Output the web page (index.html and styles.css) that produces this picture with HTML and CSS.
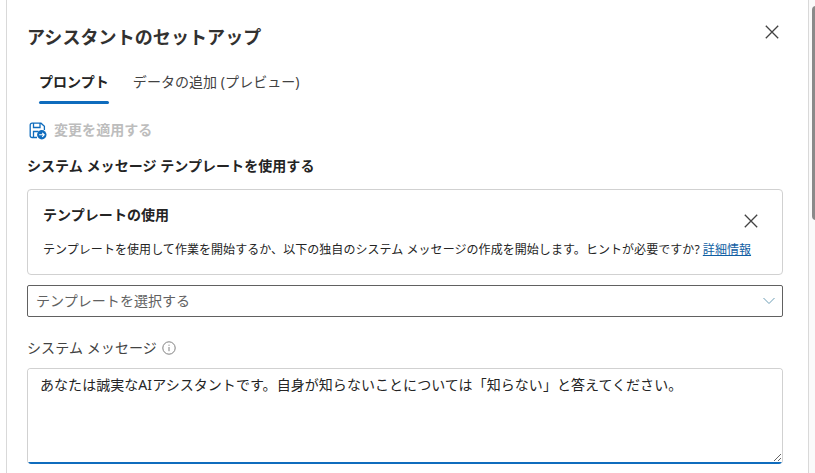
FILE: index.html
```html
<!DOCTYPE html>
<html lang="ja">

<head>
	<meta charset="UTF-8">
	<meta name="viewport" content="width=device-width, initial-scale=1.0">
	<title>アシスタントのセットアップ</title>

	<link rel="stylesheet" href="styles.css">

</head>

<body>

	<div class="main">

		<div class="panel">

			<div class="head">
				<h1>アシスタントのセットアップ</h1>
				<button class="close" aria-label="閉じる">
					<svg width="14" height="14" viewBox="0 0 14 14"><path d="M.8.8l12.4 12.4M13.2.8L.8 13.2"/></svg>
				</button>
			</div>

			<div class="tabs">
				<button class="tab active">プロンプト</button>
				<button class="tab">データの追加 (プレビュー)</button>
			</div>

			<button class="apply">
				<svg width="18" height="18" viewBox="0 0 18 18">
					<path class="line" d="M8 15.5H3A1.8 1.8 0 0 1 1.2 13.7V3A1.8 1.8 0 0 1 3 1.2H12L15.4 4.4V8M4.5 1.2V5.5H11V1.2M4.5 15.5V9.5H9.5"/>
					<circle cx="12.8" cy="12.8" r="4.7"/>
					<path class="arrow" d="M10.2 12.8H15M13.2 10.8L15.2 12.8L13.2 14.8"/>
				</svg>
				<span>変更を適用する</span>
			</button>

			<h4 class="section_title">システム メッセージ テンプレートを使用する</h4>

			<div class="card">
				<div class="card_head">
					<h4>テンプレートの使用</h4>
					<button class="close" aria-label="閉じる">
						<svg width="14" height="14" viewBox="0 0 14 14"><path d="M.8.8l12.4 12.4M13.2.8L.8 13.2"/></svg>
					</button>
				</div>
				<p>テンプレートを使用して作業を開始するか、以下の独自のシステム メッセージの作成を開始します。ヒントが必要ですか? <a href="#">詳細情報</a></p>
			</div>

			<div class="select">
				<span>テンプレートを選択する</span>
				<svg width="12" height="8" viewBox="0 0 12 8"><path d="M.5 1L6 6.5L11.5 1"/></svg>
			</div>

			<div class="label">
				<label for="message">システム メッセージ</label>
				<svg width="14" height="14" viewBox="0 0 14 14">
					<circle cx="7" cy="7" r="6.2"/>
					<path d="M7 6V10.2M7 3.7V4.8"/>
				</svg>
			</div>

			<div class="message">
				<textarea id="message" spellcheck="false">あなたは誠実なAIアシスタントです。自身が知らないことについては「知らない」と答えてください。</textarea>
			</div>

		</div>

		<div class="scroll"></div>

	</div>

</body>

</html>
```

FILE: styles.css
```css
* {
	font-family: 'Noto Sans', 'Noto Sans CJK JP', sans-serif;
	box-sizing: border-box;
}

body {
	margin: 0;
	overflow: hidden;
	background: #fff;
}

h1,
h4,
p {
	margin: 0;
}

button {
	padding: 0;
	border: 0;
	background: none;
}

svg {
	display: block;
	flex: none;
	fill: none;
}

.main {
	display: flex;
	height: 473px;
	padding-left: 6px;
}

.panel {
	width: 803px;
	padding: 0 25px 0 20px;
	border-left: 1px solid #d9d9d9;
	border-right: 1px solid #d9d9d9;
}

.scroll {
	flex: 1;
	padding: 6px 0 0 3px;
	background: #fafafa;
	overflow: hidden;
}

.scroll::before {
	content: "";
	display: block;
	width: 8px;
	height: 214px;
	border-radius: 4px;
	background: #8a8a8a;
}

.head {
	display: flex;
	justify-content: space-between;
	height: 68px;
	padding: 23px 4px 0 0;
}

h1 {
	font-size: 18px;
	line-height: 28px;
	letter-spacing: 0.08px;
	color: #323130;
}

.close {
	height: 18px;
}

.close svg {
	stroke: #424242;
	stroke-width: 1.3;
}

.tabs {
	display: flex;
	gap: 24px;
	height: 36px;
	padding-left: 12px;
}

.tab {
	height: 36px;
	padding-bottom: 5px;
	border-bottom: 3px solid transparent;
	font-size: 14px;
	line-height: 28px;
	letter-spacing: 0.05px;
	color: #424242;
}

.tab.active {
	position: relative;
	border-bottom: 0;
	padding-bottom: 8px;
	font-weight: 700;
	color: #242424;
}

.tab.active::after {
	content: "";
	position: absolute;
	left: 0;
	right: 0;
	bottom: 0;
	height: 3px;
	border-radius: 2px;
	background: #0f6cbd;
}

.apply {
	display: flex;
	align-items: center;
	gap: 7px;
	height: 20px;
	margin-top: 17px;
	padding-left: 2px;
	font-size: 14px;
	font-weight: 700;
	line-height: 20px;
	letter-spacing: 0.05px;
	color: #bdbdbd;
}

.apply span {
	padding-bottom: 2px;
}

.apply .line {
	stroke: #0f6cbd;
	stroke-width: 1.3;
}

.apply circle {
	fill: #0f6cbd;
}

.apply .arrow {
	stroke: #fff;
	stroke-width: 1.1;
}

h4 {
	font-size: 14px;
	line-height: 20px;
	letter-spacing: 0.06px;
	color: #242424;
}

.section_title {
	margin-top: 15px;
}

.card {
	height: 86px;
	margin-top: 13px;
	padding: 15px;
	border: 1px solid #d1d1d1;
	border-radius: 4px;
}

.card_head {
	display: flex;
	justify-content: space-between;
	height: 35px;
	padding-right: 9px;
}

.card_head .close {
	margin-top: 7px;
}

.card p {
	font-size: 12px;
	line-height: 20px;
	letter-spacing: 0.055px;
	white-space: nowrap;
	color: #242424;
}

.card a {
	color: #115ea3;
}

.select {
	display: flex;
	align-items: center;
	justify-content: space-between;
	height: 32px;
	margin-top: 10px;
	padding: 0 7px 0 8px;
	border: 1px solid #616161;
	border-radius: 2px;
	font-size: 14px;
	line-height: 30px;
	letter-spacing: 0.05px;
	color: #616161;
}

.select svg {
	stroke: #6c9db5;
}

.label {
	display: flex;
	align-items: center;
	gap: 5px;
	height: 20px;
	margin-top: 21px;
	font-size: 14px;
	line-height: 20px;
	letter-spacing: 0.1px;
	color: #424242;
}

.label svg {
	stroke: #808080;
}

.message {
	position: relative;
	height: 96px;
	margin-top: 10px;
	border: 1px solid #d1d1d1;
	border-bottom: 0;
	border-radius: 4px;
	overflow: hidden;
}

/* フォーカス時の下線 */
.message::after {
	content: "";
	position: absolute;
	left: 0;
	right: 0;
	bottom: 0;
	height: 2px;
	background: #0f6cbd;
}

textarea {
	display: block;
	width: 100%;
	height: 93px;
	padding: 6px 12px;
	border: 0;
	outline: 0;
	resize: vertical;
	font-size: 14px;
	line-height: 20px;
	letter-spacing: 0.05px;
	color: #242424;
}
```
